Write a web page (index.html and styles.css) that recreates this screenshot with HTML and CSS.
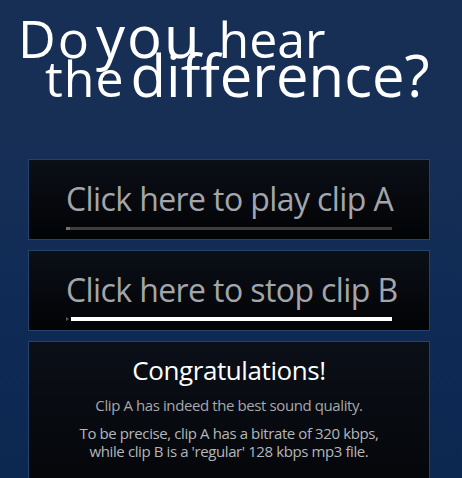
FILE: index.html
```html
<!DOCTYPE html>
<html lang="en">
<head>
  <meta charset="UTF-8" />
  <title>Do you hear the difference?</title>
  <link rel="stylesheet" href="styles.css">
</head>
<body>
  <div class="page">
    <h1 class="title">
      <span class="line first"><span class="w-do">Do</span><span class="w-you">you</span><span class="w-hear">hear</span></span>
      <span class="line second"><span class="w-the">the</span><span class="w-diff">difference?</span></span>
    </h1>

    <div class="panel clip">
      <button class="clip-btn" id="clipA">Click here to play clip A</button>
      <div class="track"><span class="head"></span><span class="rest"></span></div>
    </div>

    <div class="panel clip">
      <button class="clip-btn" id="clipB">Click here to stop clip B</button>
      <div class="track playing"><span class="arrow"></span><span class="rest"></span></div>
    </div>

    <div class="panel result">
      <h2>Congratulations!</h2>
      <p class="lead">Clip A has indeed the best sound quality.</p>
      <p class="detail">To be precise, clip A has a bitrate of 320 kbps,<br>while clip B is a 'regular' 128 kbps mp3 file.</p>
    </div>
  </div>
</body>
</html>
```

FILE: styles.css
```css
* {
  box-sizing: border-box;
}

body, html {
  margin: 0;
  padding: 0;
  height: 100%;
  overflow: hidden;
}

body {
  font-family: 'Open Sans', sans-serif;
  background: linear-gradient(to bottom, #172f55 0px, #172f55 140px, #0f2b55 300px, #0c2750 100%);
}

.title {
  margin: 0;
  padding-top: 16px;
  height: 159px;
  color: #fff;
  font-weight: normal;
}

.line {
  display: flex;
  align-items: baseline;
  white-space: nowrap;
  line-height: 40px;
  height: 40px;
}

.first {
  padding-left: 18px;
}

.second {
  padding-left: 45px;
  margin-top: -1px;
}

/* each word of the heading has its own size */
.w-do {
  font-size: 52px;
  letter-spacing: 2px;
  margin-right: 5px;
}

.w-you {
  font-size: 58px;
  letter-spacing: 2px;
  margin-right: 17px;
}

.w-hear {
  font-size: 50px;
}

.w-the {
  font-size: 50px;
  letter-spacing: 1px;
  margin-right: 6px;
}

.w-diff {
  font-size: 58px;
}

.panel {
  margin: 0 0 10px 28px;
  width: 402px;
  border: 1px solid #24426a;
  background: linear-gradient(to bottom, #0b0f17, #020305);
}

.clip {
  height: 81px;
  padding: 11px 37px 0 37px;
}

.clip-btn {
  display: block;
  width: 100%;
  padding: 0;
  border: none;
  background: none;
  color: #a2a6ab;
  font-family: 'Open Sans', sans-serif;
  font-size: 32px;
  letter-spacing: -0.6px;
  line-height: 56px;
  text-align: center;
  white-space: nowrap;
  cursor: pointer;
}

.track {
  display: flex;
  align-items: center;
  height: 4px;
  margin-top: -1px;
}

.track .head {
  width: 4px;
  height: 3px;
  background: #707070;
}

.track .rest {
  flex: 1;
  height: 3px;
  background: #3d3d3f;
}

.track .arrow {
  width: 0;
  height: 0;
  margin-right: 2px;
  border-left: 3px solid #555;
  border-top: 2px solid transparent;
  border-bottom: 2px solid transparent;
}

.track.playing .rest {
  height: 4px;
  background: #fff;
}

.result {
  height: 200px;
  padding-top: 10px;
  text-align: center;
}

.result h2 {
  margin: 0;
  color: #fff;
  font-weight: normal;
  font-size: 26px;
  letter-spacing: -0.4px;
  line-height: 36px;
}

.result p {
  margin: 0;
  color: #a6a8ab;
  font-size: 15px;
  letter-spacing: -0.4px;
}

.result .lead {
  margin-top: 8px;
  line-height: 18px;
}

.result .detail {
  margin-top: 10px;
  color: #b4b6b9;
  line-height: 18px;
}
```
